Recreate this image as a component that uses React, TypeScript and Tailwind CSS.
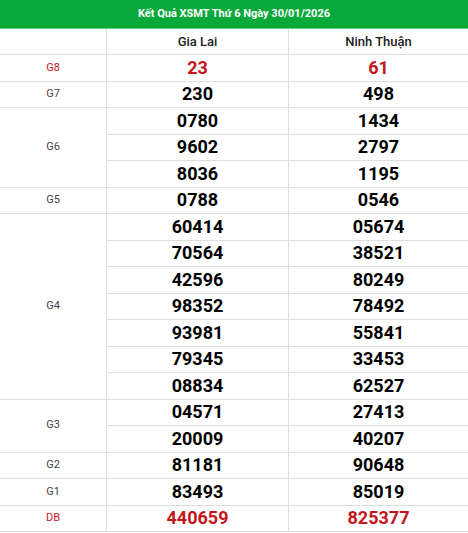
import React from "react";

type Row = { label: string; values: [string, string][]; red?: boolean };

const rows: Row[] = [
  { label: "G8", values: [["23", "61"]], red: true },
  { label: "G7", values: [["230", "498"]] },
  { label: "G6", values: [["0780", "1434"], ["9602", "2797"], ["8036", "1195"]] },
  { label: "G5", values: [["0788", "0546"]] },
  {
    label: "G4",
    values: [
      ["60414", "05674"],
      ["70564", "38521"],
      ["42596", "80249"],
      ["98352", "78492"],
      ["93981", "55841"],
      ["79345", "33453"],
      ["08834", "62527"],
    ],
  },
  { label: "G3", values: [["04571", "27413"], ["20009", "40207"]] },
  { label: "G2", values: [["81181", "90648"]] },
  { label: "G1", values: [["83493", "85019"]] },
  { label: "DB", values: [["440659", "825377"]], red: true },
];

const spanClass: Record<number, string> = {
  1: "row-span-1",
  2: "row-span-2",
  3: "row-span-3",
  7: "row-span-7",
};

export default function App() {
  return (
    <div
      className="w-[468px] h-[533px] bg-white overflow-hidden"
      style={{ fontFamily: "Roboto, 'Liberation Sans', sans-serif" }}
    >
      <div className="h-[29px] bg-[#08a83b] border-b border-[#5fd07f] flex items-center justify-center text-white text-[11px] font-bold box-border">
        Kết Quả XSMT Thứ 6 Ngày 30/01/2026
      </div>
      <div className="grid grid-cols-[107px_182px_1fr] grid-rows-[26px] auto-rows-[26.5px]">
        <div className="border-b border-r border-[#dedede] box-border" />
        <div className="border-b border-r border-[#dedede] box-border flex items-center justify-center text-[13px] font-medium text-[#222]">
          Gia Lai
        </div>
        <div className="border-b border-[#dedede] box-border flex items-center justify-center text-[13px] font-medium text-[#222]">
          Ninh Thuận
        </div>
        {rows.map((r) => (
          <React.Fragment key={r.label}>
            <div
              className={`${spanClass[r.values.length]} border-b border-r border-[#dedede] box-border flex items-center justify-center text-[11px] ${
                r.red ? "text-[#c4161c]" : "text-[#444]"
              }`}
            >
              {r.label}
            </div>
            {r.values.map(([a, b], i) => (
              <React.Fragment key={i}>
                <div
                  className={`border-b border-r border-[#dedede] box-border flex items-center justify-center text-[18px] font-bold leading-none ${
                    r.red ? "text-[#c4161c]" : "text-black"
                  }`}
                >
                  {a}
                </div>
                <div
                  className={`border-b border-[#dedede] box-border flex items-center justify-center text-[18px] font-bold leading-none ${
                    r.red ? "text-[#c4161c]" : "text-black"
                  }`}
                >
                  {b}
                </div>
              </React.Fragment>
            ))}
          </React.Fragment>
        ))}
      </div>
    </div>
  );
}
